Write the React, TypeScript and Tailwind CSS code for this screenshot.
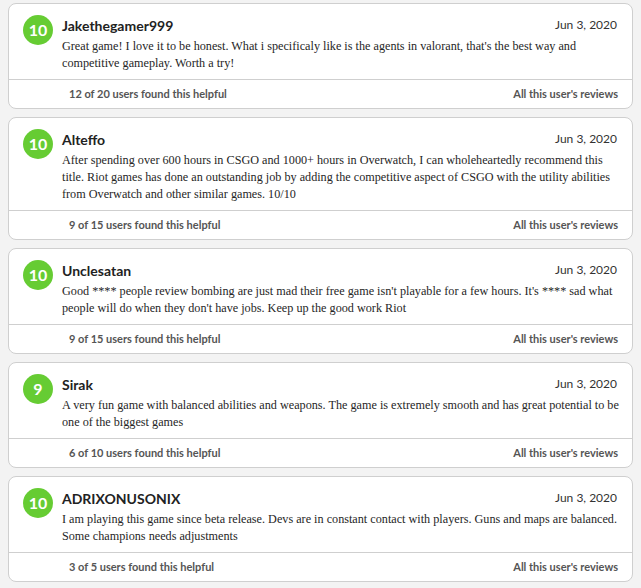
const reviews = [
  {
    score: 10,
    name: "Jakethegamer999",
    date: "Jun 3, 2020",
    body: "Great game! I love it to be honest. What i specificaly like is the agents in valorant, that's the best way and competitive gameplay. Worth a try!",
    helpful: "12 of 20 users found this helpful",
  },
  {
    score: 10,
    name: "Alteffo",
    date: "Jun 3, 2020",
    body: "After spending over 600 hours in CSGO and 1000+ hours in Overwatch, I can wholeheartedly recommend this title. Riot games has done an outstanding job by adding the competitive aspect of CSGO with the utility abilities from Overwatch and other similar games. 10/10",
    helpful: "9 of 15 users found this helpful",
  },
  {
    score: 10,
    name: "Unclesatan",
    date: "Jun 3, 2020",
    body: "Good **** people review bombing are just mad their free game isn't playable for a few hours. It's **** sad what people will do when they don't have jobs. Keep up the good work Riot",
    helpful: "9 of 15 users found this helpful",
  },
  {
    score: 9,
    name: "Sirak",
    date: "Jun 3, 2020",
    body: "A very fun game with balanced abilities and weapons. The game is extremely smooth and has great potential to be one of the biggest games",
    helpful: "6 of 10 users found this helpful",
  },
  {
    score: 10,
    name: "ADRIXONUSONIX",
    date: "Jun 3, 2020",
    body: "I am playing this game since beta release. Devs are in constant contact with players. Guns and maps are balanced. Some champions needs adjustments",
    helpful: "3 of 5 users found this helpful",
  },
];

const sans = "font-['Lato','Liberation_Sans',sans-serif]";

const App = () => {
  return (
    <div className="min-h-screen bg-[#f3f3f3] px-2 pt-[3px] flex flex-col gap-[8px] w-[641px]">
      {reviews.map((r) => (
        <div
          key={r.name}
          className="w-[625px] bg-white border border-[#cfcfcf] rounded-[8px] overflow-hidden"
        >
          <div className="flex pt-[11px] pl-[14px] pr-[10px] pb-[7px]">
            <div
              className={`w-[30px] h-[30px] shrink-0 rounded-full bg-[#66cc33] text-white flex items-center justify-center text-[16px] font-bold ${sans}`}
            >
              {r.score}
            </div>
            <div className="ml-[9px] flex-1">
              <div className="flex items-center justify-between h-[20px] pr-[5px]">
                <span className={`text-[14px] font-bold text-[#222] ${sans}`}>{r.name}</span>
                <span className={`text-[12px] text-[#333] ${sans}`}>{r.date}</span>
              </div>
              <p className="mt-[3px] text-[12.2px] leading-[17px] text-[#262626] font-['Liberation_Serif',serif]">
                {r.body}
              </p>
            </div>
          </div>
          <div
            className={`border-t border-[#cfcfcf] h-[29px] flex items-center justify-between pl-[60px] pr-[14px] text-[11px] font-bold text-[#555] ${sans}`}
          >
            <span>{r.helpful}</span>
            <span>All this user's reviews</span>
          </div>
        </div>
      ))}
    </div>
  );
};

export default App;
